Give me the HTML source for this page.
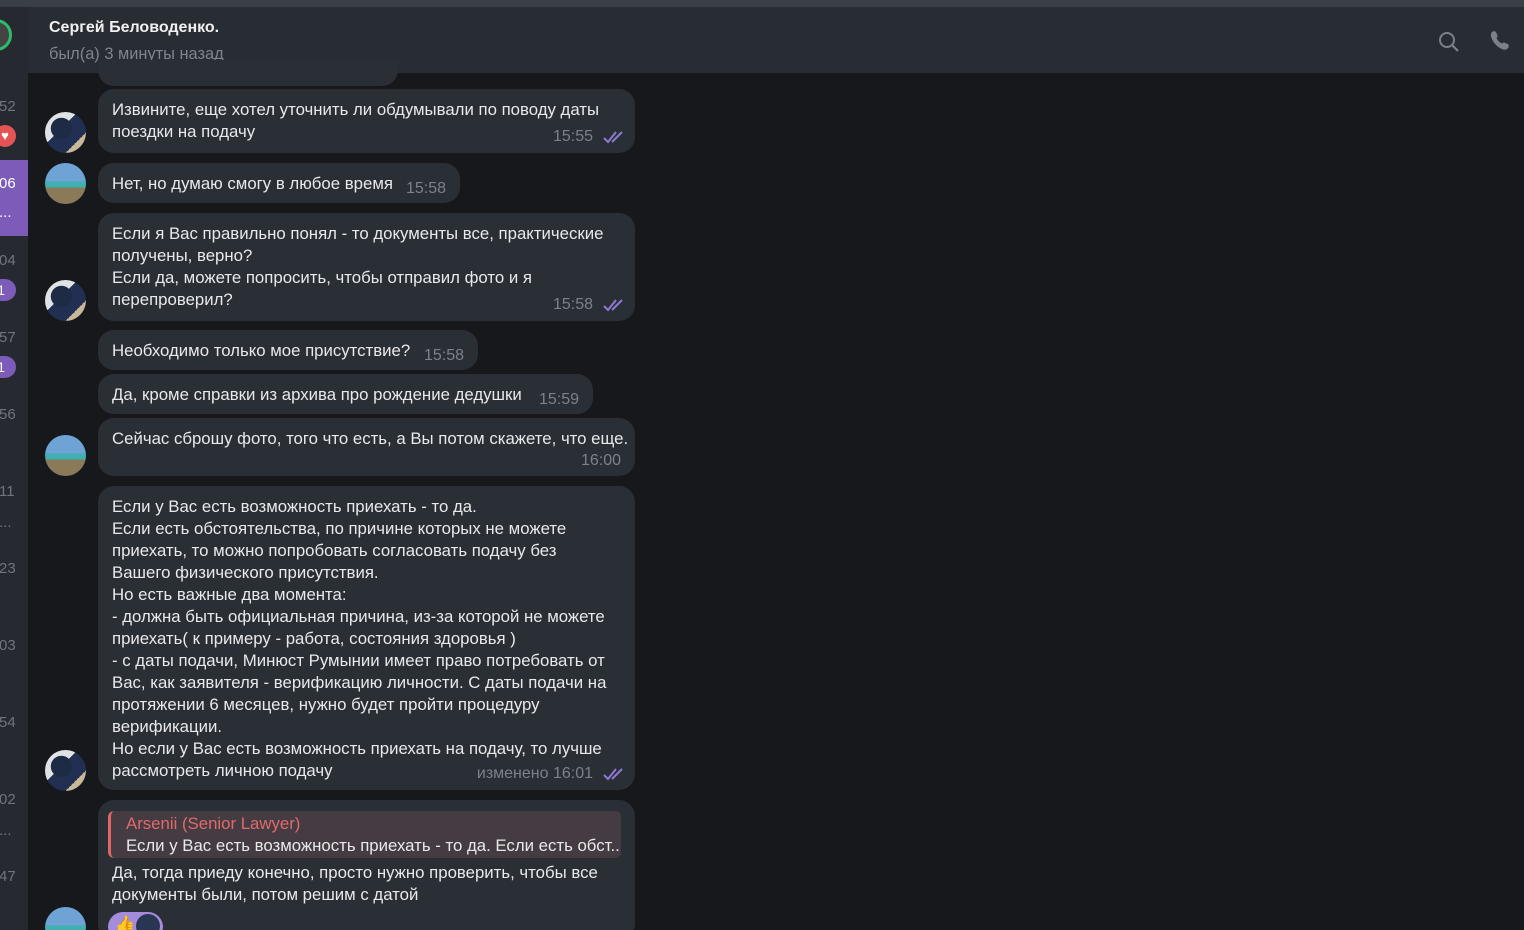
<!DOCTYPE html>
<html><head><meta charset="utf-8"><style>
*{margin:0;padding:0;box-sizing:border-box}
html,body{width:1524px;height:930px;overflow:hidden}
body{background:#17181c;font-family:"Liberation Sans","Noto Sans CJK SC",sans-serif;position:relative;color:#e6e7e9}
.top{position:absolute;left:0;top:0;width:1524px;height:7px;background:#3a3e46}
.side{position:absolute;left:0;top:7px;width:28px;height:923px;background:#26292f}
.hdr{position:absolute;left:28px;top:7px;width:1496px;height:66px;background:#282c33}
.name{position:absolute;left:49px;top:19px;font-size:16px;font-weight:bold;color:#f0f0f0}
.st{position:absolute;left:49px;top:45px;font-size:16.4px;color:#7f858d}
.sn{position:absolute;font-size:15px;color:#6f757d;left:-1px}
.badge{position:absolute;left:-10px;width:26px;height:22px;border-radius:11px;background:#7c5cb8;color:#fff;font-size:14px;text-align:right;padding-right:11px;line-height:22px}
.b{position:absolute;left:98px;background:#2a2e35;border-radius:16px;font-size:16.8px;line-height:22px;padding:11px 14px 9px;white-space:nowrap;color:#e8e9eb}
.t{position:absolute;right:14px;bottom:5px;font-size:16px;color:#7b828b}
.ck{position:absolute;right:10px;bottom:9px}
.av{position:absolute;left:45px;width:41px;height:41px;border-radius:50%;overflow:hidden}
.a1{background:radial-gradient(circle at 40% 40%,#1e2b45 0 30%,transparent 31%),linear-gradient(135deg,#dfe3e6 0 40%,#213052 40% 75%,#c9b89a 75%)}
.a2{background:linear-gradient(180deg,#6fa3d6 0 45%,#3fb0b0 45% 60%,#8a7a5a 60%)}
</style></head><body>
<div class="top"></div>
<div class="side">
<div style="position:absolute;left:-20px;top:12px;width:32px;height:32px;border-radius:50%;border:3px solid #2dbb6a;background:#444"></div>
<div class="sn" style="top:91px">52</div>
<div style="position:absolute;left:-6px;top:118px;width:22px;height:22px;border-radius:50%;background:#e45454;color:#fff;font-size:13px;line-height:22px;text-align:center">♥</div>
<div style="position:absolute;left:0;top:153px;width:28px;height:76px;background:#7c5cb8"></div>
<div class="sn" style="top:168px;color:#fff">06</div>
<div class="sn" style="top:197px;color:#fff">...</div>
<div class="sn" style="top:245px">04</div>
<div class="badge" style="top:272px">1</div>
<div class="sn" style="top:322px">57</div>
<div class="badge" style="top:349px">1</div>
<div class="sn" style="top:399px">56</div>
<div class="sn" style="top:476px">11</div>
<div class="sn" style="top:507px">...</div>
<div class="sn" style="top:553px">23</div>
<div class="sn" style="top:630px">03</div>
<div class="sn" style="top:707px">54</div>
<div class="sn" style="top:784px">02</div>
<div class="sn" style="top:815px">...</div>
<div class="sn" style="top:861px">47</div>
</div>
<div class="hdr"></div>
<div class="name">Сергей Беловоденко.</div>
<div class="st">был(а) 3 минуты назад</div>
<svg style="position:absolute;left:1437px;top:30px" width="24" height="24" viewBox="0 0 24 24"><circle cx="10" cy="10" r="7" fill="none" stroke="#7c8088" stroke-width="2"/><path d="M15 15l6 6" stroke="#7c8088" stroke-width="2.2"/></svg>
<svg style="position:absolute;left:1488px;top:29px" width="24" height="24" viewBox="0 0 24 24"><path d="M4 3c1-1 3-1 4 0l1.5 3.5c.4 1-.3 1.8-1 2.4 1 2.5 3 4.6 5.6 5.7.6-.7 1.4-1.4 2.4-1l3.5 1.5c1 .5 1 3 0 4-1 1-2.5 2-4.5 1.5C10 19 5 14 3 7.5 2.6 5.7 3 4 4 3z" fill="#7c8088"/></svg>

<div style="position:absolute;left:98px;top:60px;width:300px;height:26px;background:#2a2e35;border-radius:0 0 16px 16px"></div>

<div class="b" style="top:89px;width:537px;height:64px;padding-top:10px">Извините, еще хотел уточнить ли обдумывали по поводу даты<br>поездки на подачу<span class="t" style="right:42px">15:55</span><svg class="ck" width="22" height="14" viewBox="0 0 22 14"><path d="M1 8l4 4L13 2M9 12L19 2" fill="none" stroke="#8c7ad6" stroke-width="2"/></svg></div>
<div class="av a1" style="top:112px"></div>

<div class="b" style="top:163px;width:362px;height:40px;padding-top:10px">Нет, но думаю смогу в любое время<span class="t" style="bottom:3px">15:58</span></div>
<div class="av a2" style="top:163px"></div>

<div class="b" style="top:213px;width:537px;height:108px;padding-top:10px">Если я Вас правильно понял - то документы все, практические<br>получены, верно?<br>Если да, можете попросить, чтобы отправил фото и я<br>перепроверил?<span class="t" style="right:42px">15:58</span><svg class="ck" width="22" height="14" viewBox="0 0 22 14"><path d="M1 8l4 4L13 2M9 12L19 2" fill="none" stroke="#8c7ad6" stroke-width="2"/></svg></div>
<div class="av a1" style="top:280px"></div>

<div class="b" style="top:330px;width:380px;height:40px;padding-top:10px">Необходимо только мое присутствие?<span class="t" style="bottom:3px">15:58</span></div>
<div class="b" style="top:374px;width:495px;height:40px;padding-top:10px">Да, кроме справки из архива про рождение дедушки<span class="t" style="bottom:3px">15:59</span></div>
<div class="b" style="top:418px;width:537px;height:58px;padding-top:10px">Сейчас сброшу фото, того что есть, а Вы потом скажете, что еще.<span class="t" style="bottom:4px">16:00</span></div>
<div class="av a2" style="top:435px"></div>

<div class="b" style="top:486px;width:537px;height:304px;padding-top:10px">Если у Вас есть возможность приехать - то да.<br>Если есть обстоятельства, по причине которых не можете<br>приехать, то можно попробовать согласовать подачу без<br>Вашего физического присутствия.<br>Но есть важные два момента:<br>- должна быть официальная причина, из-за которой не можете<br>приехать( к примеру - работа, состояния здоровья )<br>- с даты подачи, Минюст Румынии имеет право потребовать от<br>Вас, как заявителя - верификацию личности.  С даты подачи на<br>протяжении 6 месяцев, нужно будет пройти процедуру<br>верификации.<br>Но если у Вас есть возможность приехать на подачу, то лучше<br>рассмотреть личною подачу<span class="t" style="right:42px">изменено 16:01</span><svg class="ck" width="22" height="14" viewBox="0 0 22 14"><path d="M1 8l4 4L13 2M9 12L19 2" fill="none" stroke="#8c7ad6" stroke-width="2"/></svg></div>
<div class="av a1" style="top:750px"></div>

<div class="b" style="top:800px;width:537px;height:140px;padding-top:11px">
<div style="background:#453c43;border-left:3px solid #e06666;border-radius:6px;padding:2px 10px 1px 15px;margin:0 0 4px -4px;width:513px;overflow:hidden"><div style="color:#e06a6a">Arsenii (Senior Lawyer)</div><div>Если у Вас есть возможность приехать - то да. Если есть обст...</div></div>
Да, тогда приеду конечно, просто нужно проверить, чтобы все<br>документы были, потом решим с датой
<div style="position:absolute;left:10px;top:112px;width:55px;height:30px;border-radius:15px;background:#a58bdc"><span style="position:absolute;left:7px;top:2px;font-size:16px">👍</span><span style="position:absolute;left:28px;top:2px;width:24px;height:24px;border-radius:50%;background:#2a3552"></span></div>
<span class="t" style="bottom:-8px">16:06</span></div>
<div class="av a2" style="top:907px"></div>
</body></html>
